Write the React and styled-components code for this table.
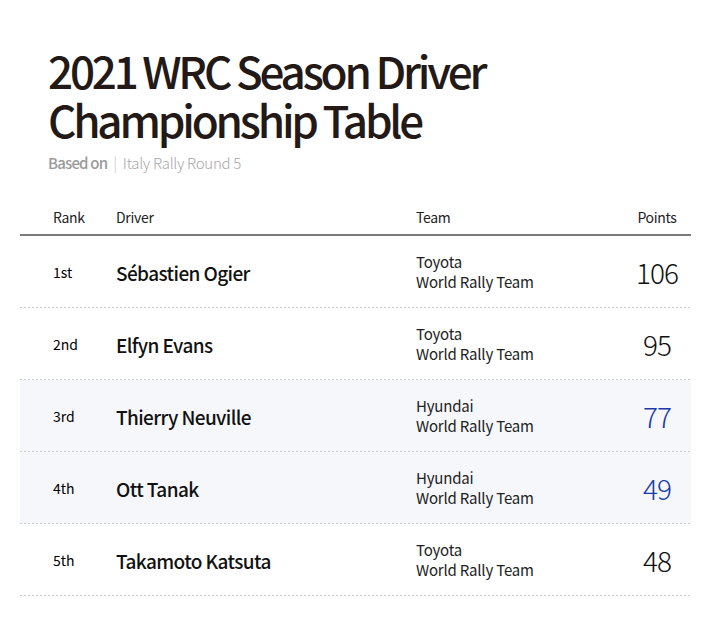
import React from 'react';
import styled, { createGlobalStyle } from 'styled-components';

const GlobalStyle = createGlobalStyle`
	html, body {
		margin: 0;
		padding: 0;
		background: #fff;
	}
	body {
		font-family: 'Noto Sans CJK KR', 'Noto Sans', sans-serif;
		color: #111;
	}
`;

const drivers = [
	{ rank: '1st', name: 'Sébastien Ogier', team: 'Toyota', points: 106 },
	{ rank: '2nd', name: 'Elfyn Evans', team: 'Toyota', points: 95 },
	{ rank: '3rd', name: 'Thierry Neuville', team: 'Hyundai', points: 77 },
	{ rank: '4th', name: 'Ott Tanak', team: 'Hyundai', points: 49 },
	{ rank: '5th', name: 'Takamoto Katsuta', team: 'Toyota', points: 48 },
];

export default function App() {
	return (
		<>
			<GlobalStyle />
			<Page>
				<Title>
					2021 WRC Season Driver
					<br />
					Championship Table
				</Title>
				<Subtitle>
					<strong>Based on</strong>
					<Divider>|</Divider>
					Italy Rally Round 5
				</Subtitle>
				<Table>
					<HeadRow>
						<RankCell>Rank</RankCell>
						<div>Driver</div>
						<div>Team</div>
						<PointsHead>Points</PointsHead>
					</HeadRow>
					{drivers.map((d) => {
						const hyundai = d.team === 'Hyundai';
						return (
							<Row key={d.rank} $shaded={hyundai}>
								<Rank>{d.rank}</Rank>
								<Name>{d.name}</Name>
								<Team>
									{d.team}
									<br />
									World Rally Team
								</Team>
								<Points $blue={hyundai}>{d.points}</Points>
							</Row>
						);
					})}
				</Table>
			</Page>
		</>
	);
}

const Page = styled.div`
	width: 712px;
	padding: 46px 21px 0 20px;
	box-sizing: border-box;
`;

const Title = styled.h1`
	margin: 0 0 0 28px;
	font-size: 44px;
	line-height: 49px;
	font-weight: 500;
	letter-spacing: -3.2px;
	color: #231916;
`;

const Subtitle = styled.div`
	margin: 8px 0 0 28px;
	font-size: 15px;
	line-height: 22px;
	color: #a8a8a8;
	font-weight: 300;
	letter-spacing: -0.3px;
	strong {
		font-weight: 500;
		color: #9a9a9a;
		letter-spacing: -0.8px;
	}
`;

const Divider = styled.span`
	margin: 0 6px;
	color: #c8c8c8;
`;

const Table = styled.div`
	margin-top: 23px;
`;

const cols = `
	display: grid;
	grid-template-columns: 96px 300px 1fr 68px;
	align-items: center;
`;

const HeadRow = styled.div`
	${cols}
	height: 34px;
	padding: 3px 0 0;
	border-bottom: 2px solid #7c7c7c;
	font-size: 14px;
	font-weight: 400;
	color: #222;
	letter-spacing: -0.3px;
`;

const RankCell = styled.div`
	padding-left: 33px;
`;

const PointsHead = styled.div`
	text-align: center;
`;

const Row = styled.div`
	${cols}
	height: 72px;
	background-color: ${(p) => (p.$shaded ? '#f6f7fb' : '#fff')};
	background-image: linear-gradient(to right, #cdcdcd 50%, transparent 50%);
	background-size: 4px 1px;
	background-repeat: repeat-x;
	background-position: left bottom;
`;

const Rank = styled.div`
	padding-left: 33px;
	font-size: 14px;
	font-weight: 400;
	color: #000;
`;

const Name = styled.div`
	font-size: 19px;
	font-weight: 500;
	letter-spacing: -0.6px;
	color: #111;
`;

const Team = styled.div`
	font-size: 15px;
	line-height: 20px;
	font-weight: 400;
	letter-spacing: -0.2px;
	color: #222;
`;

const Points = styled.div`
	text-align: center;
	font-size: 28px;
	font-weight: 300;
	letter-spacing: -1px;
	color: ${(p) => (p.$blue ? '#1a3aa8' : '#111')};
`;
